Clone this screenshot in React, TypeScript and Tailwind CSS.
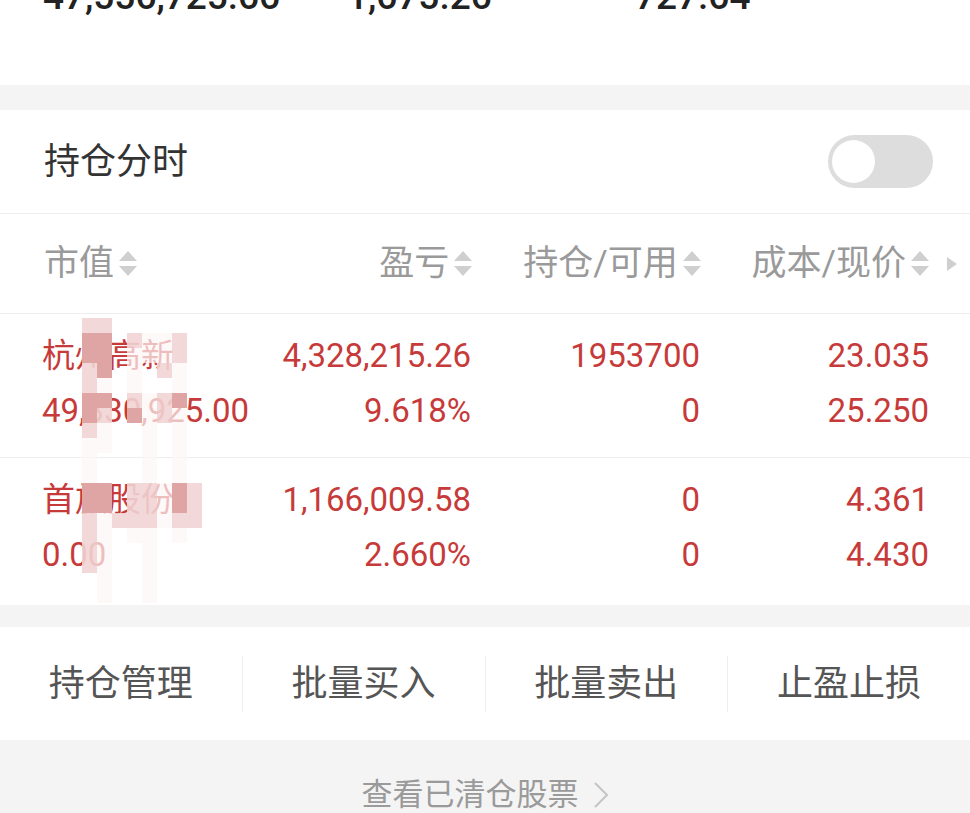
import { FC } from 'react'

const FONT = "font-['Roboto','Noto_Sans_CJK_SC',sans-serif]"
const RED = 'text-[#c73a3a]'

interface Holding {
  name: string
  value: string
  profit: string
  profitPct: string
  position: string
  available: string
  cost: string
  price: string
}

const holdings: Holding[] = [
  {
    name: '杭州高新',
    value: '49,330,925.00',
    profit: '4,328,215.26',
    profitPct: '9.618%',
    position: '1953700',
    available: '0',
    cost: '23.035',
    price: '25.250',
  },
  {
    name: '首旅股份',
    value: '0.00',
    profit: '1,166,009.58',
    profitPct: '2.660%',
    position: '0',
    available: '0',
    cost: '4.361',
    price: '4.430',
  },
]

// mosaic that hides the names, 8 x 19 cells of 15px
const mosaic = [
  'qq......',
  'pp.qwwq.',
  'pp.wwwq.',
  'qp.w.qw.',
  'qw.w..w.',
  'pp.qwqp.',
  'pq.pwqw.',
  'qw..w.w.',
  'ww..w.w.',
  'w...w.w.',
  'w...w.w.',
  'pp.qqwpq',
  'pp.qqwpq',
  'qwqqqwqq',
  'qw.ww.w.',
  'qw..w...',
  'qw..w...',
  '.w..w...',
  '.w..w...',
]

const cellClass: Record<string, string> = {
  p: 'h-[15px] w-[15px] bg-[#dfa5a5]',
  q: 'h-[15px] w-[15px] bg-[#f1d4d4]/90',
  w: 'h-[15px] w-[15px] bg-[#fdf7f7]/70',
  '.': 'h-[15px] w-[15px]',
}

const SortArrows: FC = () => (
  <span className="ml-[5px] inline-flex flex-col gap-[5px]">
    <svg width="18" height="10" viewBox="0 0 18 10">
      <polygon points="9,0 18,10 0,10" fill="#cfcfcf" />
    </svg>
    <svg width="18" height="10" viewBox="0 0 18 10">
      <polygon points="0,0 18,0 9,10" fill="#cfcfcf" />
    </svg>
  </span>
)

const HeaderCell: FC<{ label: string; end?: boolean }> = ({ label, end }) => (
  <div className={`flex items-center ${end ? 'justify-end' : 'justify-start'}`}>
    <span className="text-[35px] leading-none">{label}</span>
    <SortArrows />
  </div>
)

const App: FC = () => {
  return (
    <div className={`w-[970px] h-[813px] overflow-hidden bg-[#f4f4f4] ${FONT}`}>
      {/* summary numbers, scrolled mostly out of view */}
      <div className="h-[85px] overflow-hidden bg-white">
        <div className="-mt-[22px] flex pl-[43px] text-[37px] leading-[37px] font-medium text-[#222222]">
          <div className="w-[304px]">47,556,725.66</div>
          <div className="w-[288px]">1,675.26</div>
          <div>727.64</div>
        </div>
      </div>

      <div className="mt-[25px] bg-white">
        <div className="flex h-[104px] items-center justify-between border-b border-[#eeeeee] pl-[44px] pr-[37px]">
          <span className="text-[36px] leading-none text-[#333333]">持仓分时</span>
          <div className="flex h-[53px] w-[105px] items-center rounded-full bg-[#dddddd] px-[4px]">
            <div className="h-[43px] w-[43px] rounded-full bg-white" />
          </div>
        </div>

        <div className="flex h-[100px] items-center border-b border-[#eeeeee] pl-[44px] pr-[13px] text-[#9a9a9a]">
          <div className="grid w-[885px] grid-cols-[200px_1fr_1fr_1fr]">
            <HeaderCell label="市值" />
            <HeaderCell label="盈亏" end />
            <HeaderCell label="持仓/可用" end />
            <HeaderCell label="成本/现价" end />
          </div>
          <svg className="ml-[18px]" width="10" height="14" viewBox="0 0 10 14">
            <polygon points="0,0 10,7 0,14" fill="#cfcfcf" />
          </svg>
        </div>

        <div className="relative">
          {holdings.map((h, i) => (
            <div
              key={h.name}
              className={`grid grid-cols-[200px_1fr_1fr_1fr] pl-[42px] pr-[41px] pt-[14px] text-[33px] leading-[55px] ${RED} ${
                i === 0 ? 'h-[144px] border-b border-[#eeeeee]' : 'h-[147px]'
              }`}
            >
              <div className="flex flex-col whitespace-nowrap">
                <span>{h.name}</span>
                <span>{h.value}</span>
              </div>
              <div className="flex flex-col items-end">
                <span>{h.profit}</span>
                <span>{h.profitPct}</span>
              </div>
              <div className="flex flex-col items-end">
                <span>{h.position}</span>
                <span>{h.available}</span>
              </div>
              <div className="flex flex-col items-end">
                <span>{h.cost}</span>
                <span>{h.price}</span>
              </div>
            </div>
          ))}
          <div className="absolute left-[82px] top-[4px] grid grid-cols-8">
            {mosaic.flatMap((row, r) =>
              row.split('').map((c, k) => <div key={`${r}-${k}`} className={cellClass[c]} />),
            )}
          </div>
        </div>
      </div>

      <div className="mt-[22px] flex h-[113px] items-center bg-white text-[36px] leading-none text-[#555555]">
        <div className="flex flex-1 justify-center">持仓管理</div>
        <div className="h-[56px] w-px bg-[#eeeeee]" />
        <div className="flex flex-1 justify-center">批量买入</div>
        <div className="h-[56px] w-px bg-[#eeeeee]" />
        <div className="flex flex-1 justify-center">批量卖出</div>
        <div className="h-[56px] w-px bg-[#eeeeee]" />
        <div className="flex flex-1 justify-center">止盈止损</div>
      </div>

      <div className="flex items-center justify-center pt-[39px] text-[31px] leading-none text-[#9a9a9a]">
        <span>查看已清仓股票</span>
        <svg className="ml-[14px]" width="16" height="28" viewBox="0 0 16 28">
          <polyline points="2,2 14,14 2,26" fill="none" stroke="#c4c4c4" strokeWidth="2" />
        </svg>
      </div>
    </div>
  )
}

export default App
